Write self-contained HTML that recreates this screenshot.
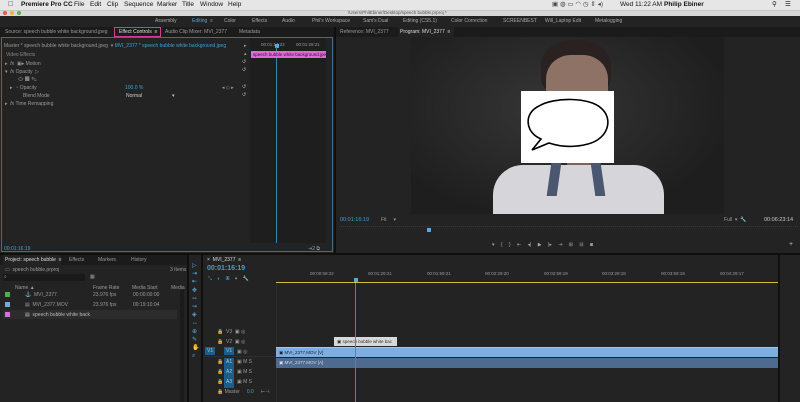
<!DOCTYPE html>
<html><head><meta charset="utf-8"><style>
*{margin:0;padding:0;box-sizing:border-box}
body{width:800px;height:402px;overflow:hidden;background:#0f0f0f;font-family:"Liberation Sans",sans-serif;font-size:5px;color:#9a9a9a;position:relative}
div,span{position:absolute;white-space:nowrap}
.b{color:#3fa0d8}
</style></head><body>
<div style="left:0;top:0;width:800px;height:10px;background:#e6e6e6;color:#111;font-size:6.5px;line-height:10px">
<span style="left:8px;font-size:7px">&#63743;</span>
<span style="left:21px;font-weight:bold">Premiere Pro CC</span>
<span style="left:74px">File</span><span style="left:90px">Edit</span><span style="left:107px">Clip</span><span style="left:124px">Sequence</span><span style="left:157px">Marker</span><span style="left:182px">Title</span><span style="left:200px">Window</span><span style="left:228px">Help</span>
<span style="left:552px;color:#444">▣ ◍ ▭ ◠ ◷ ⇕ ◂)</span>
<span style="left:620px">Wed 11:22 AM</span><span style="left:664px;font-weight:bold">Philip Ebiner</span>
<span style="left:772px">&#9906;</span><span style="left:785px">&#9776;</span>
</div>
<div style="left:0;top:10px;width:800px;height:6px;background:#d8d8d8;border-top:1px solid #c8c8c8">
<span style="left:3px;top:0px;width:4px;height:4px;border-radius:50%;background:#e9574f"></span>
<span style="left:10px;top:0px;width:4px;height:4px;border-radius:50%;background:#e6b43a"></span>
<span style="left:17px;top:0px;width:4px;height:4px;border-radius:50%;background:#4fb84a"></span>
<span style="left:348px;top:-1px;font-size:4.5px;color:#555">/Users/PhilEbiner/Desktop/speech bubble.prproj *</span>
</div>
<div style="left:0;top:16px;width:800px;height:11px;background:#232323;line-height:11px;font-size:5px;color:#a8a8a8">
<span style="left:155px">Assembly</span><span style="left:192px;color:#4ba3de">Editing &nbsp;≡</span><span style="left:224px">Color</span><span style="left:252px">Effects</span><span style="left:282px">Audio</span><span style="left:312px">Phil's Workspace</span><span style="left:363px">Sam's Dual</span><span style="left:403px">Editing (CS5.1)</span><span style="left:451px">Color Correction</span><span style="left:503px">SCREENBEST</span><span style="left:545px">Will_Laptop Edit</span><span style="left:595px">Metalogging</span>
</div>
<div style="left:0;top:27px;width:334px;height:226px;background:#232323"></div>
<div style="left:0;top:27px;width:334px;height:10px;background:#1b1b1b;line-height:10px">
<span style="left:5px">Source: speech bubble white background.jpeg</span>
<span style="left:114px;top:0;width:47px;height:10px;border:1px solid #d03c9a;color:#e0e0e0;padding-left:4px;line-height:8px">Effect Controls &nbsp;≡</span>
<span style="left:165px">Audio Clip Mixer: MVI_2377</span>
<span style="left:239px">Metadata</span>
</div>
<div style="left:1px;top:37px;width:332px;height:215px;border:1px solid #3d6f8d"></div>
<div style="left:250px;top:38px;width:76px;height:205px;background:#1e1e1e"></div>
<div style="left:4px;top:43px;color:#999">Master * speech bubble white background.jpeg &nbsp;▾ <span class="b" style="position:static">MVI_2377 * speech bubble white background.jpeg</span></div>
<span style="left:244px;top:43px">▸</span>
<span style="left:261px;top:42px;font-size:4.5px">00:01:14:22</span><span style="left:296px;top:42px;font-size:4.5px">00:01:29:21</span>
<span style="left:275px;top:44px;width:4px;height:4px;background:#5aa8dc"></span>
<span style="left:276px;top:47px;width:1px;height:196px;background:#3a86b0"></span>
<span style="left:251px;top:51px;width:75px;height:7px;background:#de6ad6;color:#3a0a3a;font-size:4.5px;line-height:7px;padding-left:2px">speech bubble white background.jpeg</span>
<span style="left:244px;top:51px">▴</span>
<span style="left:6px;top:52px;color:#888">Video Effects</span>
<span style="left:5px;top:61px">▸ &nbsp;<i>fx</i> &nbsp;▣▸ Motion</span>
<span style="left:5px;top:69px">▾ &nbsp;<i>fx</i> Opacity &nbsp;▷</span>
<span style="left:18px;top:77px;font-size:6px">⬭ ▦ ✎</span>
<span style="left:10px;top:85px">▸ &nbsp;<span class="b" style="position:static">◔</span> Opacity</span>
<span style="left:125px;top:85px" class="b">100.0 %</span>
<span style="left:222px;top:85px">◂ ◇ ▸</span>
<span style="left:23px;top:93px">Blend Mode</span>
<span style="left:126px;top:93px;width:52px;height:6px;color:#ccc">Normal<span style="left:46px">▾</span></span>
<span style="left:5px;top:101px">▸ &nbsp;<i>fx</i> Time Remapping</span>
<span style="left:242px;top:59px;color:#bbb">↺</span><span style="left:242px;top:67px;color:#bbb">↺</span><span style="left:242px;top:84px;color:#bbb">↺</span><span style="left:242px;top:92px;color:#bbb">↺</span>
<span style="left:4px;top:246px" class="b">00:01:16:19</span>
<span style="left:308px;top:246px">⇥2 ⧉</span>
<div style="left:336px;top:27px;width:464px;height:226px;background:#232323"></div>
<div style="left:336px;top:27px;width:464px;height:10px;background:#1b1b1b;line-height:10px">
<span style="left:4px">Reference: MVI_2377</span>
<span style="left:62px;width:56px;height:10px;background:#232323;color:#ddd;padding-left:2px">Program: MVI_2377 &nbsp;≡</span>
</div>
<div style="left:411px;top:37px;width:313px;height:177px;background:radial-gradient(ellipse at 45% 40%,#363636,#1e1e1e 75%)"></div>
<div style="left:541px;top:40px;width:70px;height:55px;border-radius:45% 45% 30% 30%;background:#2a2220"></div>
<div style="left:546px;top:55px;width:62px;height:60px;border-radius:40%;background:#8f7266"></div>
<div style="left:567px;top:130px;width:26px;height:40px;background:#806458"></div>
<div style="left:493px;top:165px;width:171px;height:49px;border-radius:30px 30px 0 0;background:#d6d6da"></div>
<div style="left:549px;top:163px;width:10px;height:33px;background:#4b5670;transform:skewX(-8deg)"></div>
<div style="left:593px;top:163px;width:10px;height:33px;background:#4b5670;transform:skewX(8deg)"></div>
<div style="left:521px;top:91px;width:93px;height:72px;background:#fff"></div>
<svg style="position:absolute;left:521px;top:91px" width="93" height="72" viewBox="0 0 93 72"><path d="M18 47 C4 40 3 22 18 15 C33 6 68 6 80 17 C93 28 87 48 67 53 C52 57 40 56 28 52 L11 59 L20 48 Z" fill="#fff" stroke="#000" stroke-width="1.6"/></svg>
<span style="left:340px;top:217px;font-size:5.5px" class="b">00:01:16:19</span>
<span style="left:381px;top:217px">Fit &nbsp; &nbsp; ▾</span>
<span style="left:724px;top:217px">Full &nbsp;▾ &nbsp;🔧</span>
<span style="left:764px;top:217px;font-size:5.5px;color:#ccc">00:06:23:14</span>
<div style="left:339px;top:226px;width:459px;height:6px;border-top:1px dotted #3a3a3a"></div>
<span style="left:427px;top:228px;width:4px;height:4px;background:#5aa8dc"></span>
<span style="left:492px;top:242px;color:#aaa;font-size:5px;word-spacing:5px">▾ { } ⇤ ◂| ▶ |▸ ⇥ ⊞ ⊟ ◙</span>
<span style="left:789px;top:241px;color:#bbb;font-size:7px">+</span>
<div style="left:0;top:255px;width:187px;height:147px;background:#232323"></div>
<div style="left:0;top:255px;width:187px;height:10px;background:#1b1b1b;line-height:10px">
<span style="left:3px;width:58px;height:10px;background:#232323;color:#ddd;padding-left:2px">Project: speech bubble &nbsp;≡</span>
<span style="left:69px">Effects</span><span style="left:98px">Markers</span><span style="left:131px">History</span>
</div>
<span style="left:5px;top:267px">▭ &nbsp;speech bubble.prproj</span><span style="left:170px;top:267px">3 Items</span>
<div style="left:3px;top:274px;width:82px;height:7px;background:#1a1a1a"></div><span style="left:4px;top:274px">⌕</span><span style="left:90px;top:274px">▦</span>
<span style="left:15px;top:285px">Name ▲</span><span style="left:93px;top:285px">Frame Rate</span><span style="left:132px;top:285px">Media Start</span><span style="left:171px;top:285px">Media</span>
<span style="left:5px;top:292px;width:5px;height:5px;background:#4caf4f"></span><span style="left:25px;top:292px">⚓ &nbsp;MVI_2377</span><span style="left:93px;top:292px">23.976 fps</span><span style="left:133px;top:292px">00:00:00:00</span>
<span style="left:5px;top:302px;width:5px;height:5px;background:#7aa8dc"></span><span style="left:25px;top:302px">▤ &nbsp;MVI_2377.MOV</span><span style="left:93px;top:302px">23.976 fps</span><span style="left:133px;top:302px">00:19:10:04</span>
<div style="left:3px;top:310px;width:174px;height:9px;background:#2c2c2c"></div>
<span style="left:5px;top:312px;width:5px;height:5px;background:#d670d6"></span><span style="left:25px;top:312px;color:#bbb">▤ &nbsp;speech bubble white back</span>
<div style="left:180px;top:290px;width:4px;height:112px;background:#1b1b1b"></div>
<div style="left:189px;top:255px;width:12px;height:147px;background:#232323"></div>
<span style="left:192px;top:262px;color:#5aa8dc;font-size:6px;line-height:8.2px;white-space:pre">▷
⇥
⇤
✥
⇿
⇝
◈
↔
⊕
✎
✋
⌕</span>
<div style="left:203px;top:255px;width:597px;height:147px;background:#232323"></div>
<span style="left:207px;top:257px;color:#ddd">× &nbsp;MVI_2377 &nbsp;≡</span>
<span style="left:207px;top:265px;font-size:7px;font-weight:bold" class="b">00:01:16:19</span>
<span style="left:208px;top:276px;font-size:5px;word-spacing:4px" class="b">⤡ ◐ ▣ <span style="color:#ccc;position:static">▾ 🔧</span></span>
<span style="left:310px;top:271px;font-size:4.5px">00:00:59:22</span><span style="left:368px;top:271px;font-size:4.5px">00:01:29:21</span><span style="left:427px;top:271px;font-size:4.5px">00:01:59:21</span><span style="left:485px;top:271px;font-size:4.5px">00:02:29:20</span><span style="left:544px;top:271px;font-size:4.5px">00:02:59:19</span><span style="left:602px;top:271px;font-size:4.5px">00:03:29:18</span><span style="left:661px;top:271px;font-size:4.5px">00:03:59:18</span><span style="left:720px;top:271px;font-size:4.5px">00:04:29:17</span>
<div style="left:276px;top:282px;width:502px;height:1px;background:#c9c13a"></div>
<span style="left:354px;top:278px;width:4px;height:4px;background:#5aa8dc"></span>
<div style="left:276px;top:283px;width:1px;height:119px;background:#2c2c2c"></div>
<div style="left:778px;top:255px;width:2px;height:147px;background:#111"></div>
<span style="left:217px;top:329px">🔒 &nbsp;V3 &nbsp;▣ ◎</span>
<span style="left:217px;top:339px">🔒 &nbsp;V2 &nbsp;▣ ◎</span>
<span style="left:205px;top:347px;width:10px;height:8px;background:#1d5d8c;color:#9cc;line-height:8px;padding-left:2px">V1</span>
<span style="left:224px;top:347px;width:10px;height:8px;background:#1d5d8c;color:#9cc;line-height:8px;padding-left:2px">V1</span><span style="left:237px;top:349px">▣ ◎</span>
<span style="left:224px;top:358px;width:10px;height:30px;background:#1d5d8c"></span>
<span style="left:226px;top:359px;color:#9cc">A1</span><span style="left:226px;top:369px;color:#9cc">A2</span><span style="left:226px;top:379px;color:#9cc">A3</span>
<span style="left:217px;top:359px">🔒</span><span style="left:217px;top:369px">🔒</span><span style="left:217px;top:379px">🔒</span>
<span style="left:237px;top:359px">▣ M S</span><span style="left:237px;top:369px">▣ M S</span><span style="left:237px;top:379px">▣ M S</span>
<span style="left:217px;top:389px">🔒 Master &nbsp; &nbsp; <span class="b" style="position:static">0.0</span> &nbsp; &nbsp; ⊢⊣</span>
<div style="left:203px;top:356px;width:575px;height:1px;background:#2e2e2e"></div>
<div style="left:334px;top:337px;width:63px;height:9px;background:#d8d8d8;color:#333;font-size:4.5px;line-height:9px;padding-left:3px">▣ speech bubble white bac</div>
<div style="left:276px;top:347px;width:502px;height:10px;background:#7eaee0;color:#223;font-size:4.5px;line-height:10px;padding-left:3px;border-top:1px solid #a0c8f0">▣ MVI_2377.MOV [V]</div>
<div style="left:276px;top:358px;width:502px;height:10px;background:#4e6a8e;color:#cde;font-size:4.5px;line-height:10px;padding-left:3px">▣ MVI_2377.MOV [A]</div>
<div style="left:355px;top:283px;width:1px;height:119px;background:#3e8cb6"></div>
</body></html>
